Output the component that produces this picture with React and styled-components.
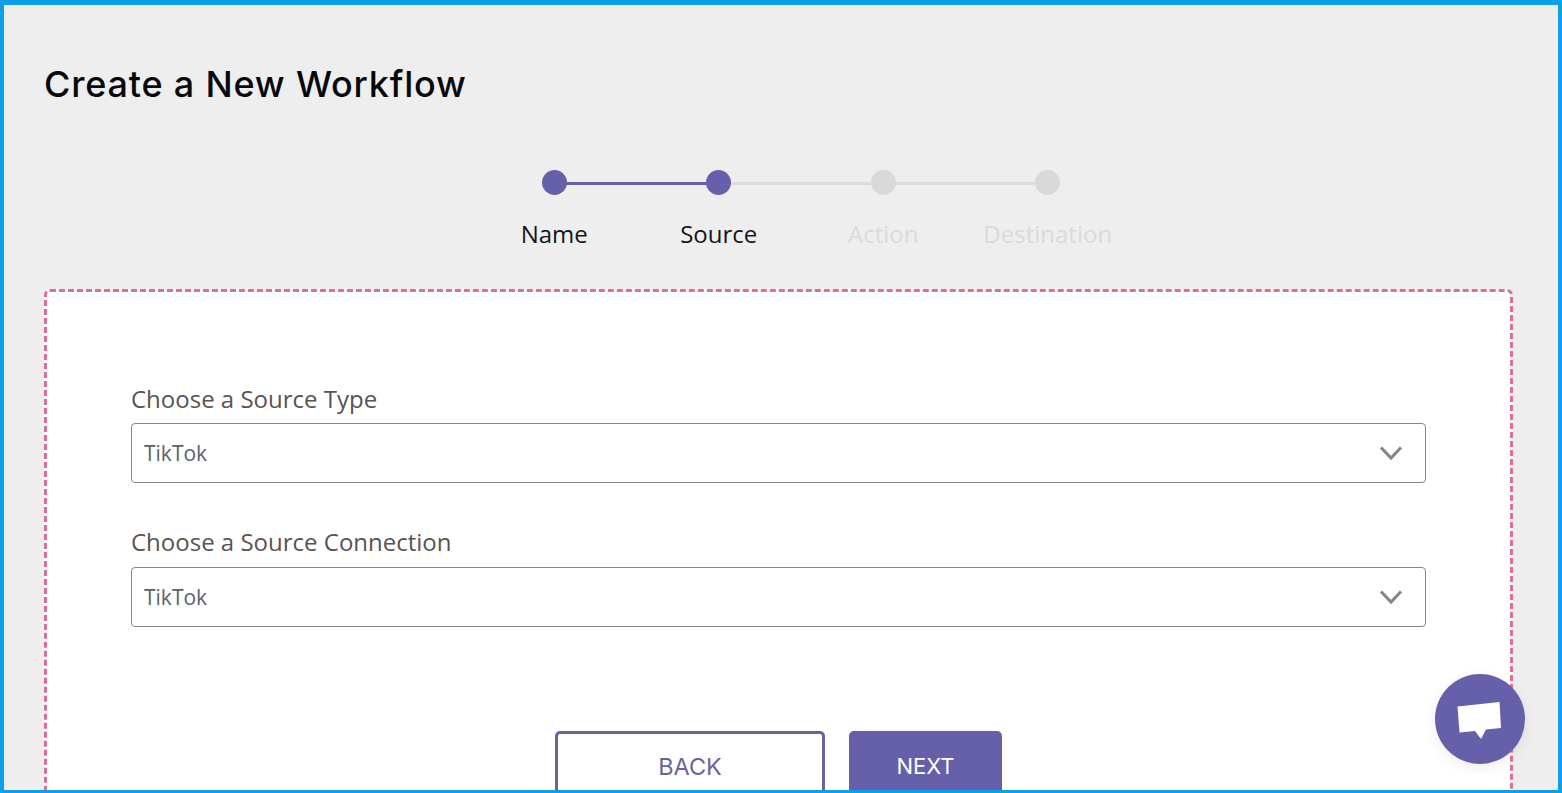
import React from "react";
import styled, { createGlobalStyle } from "styled-components";

const Global = createGlobalStyle`
  html, body { margin: 0; padding: 0; background: #eeeeef; }
  * { box-sizing: border-box; }
`;

const Frame = styled.div`
  position: relative;
  width: 1562px;
  height: 793px;
  overflow: hidden;
  background: #eeeeef;
  border: solid #0d9fea;
  border-width: 5px 4px 3px 4px;
  padding: 56px 45px 0 40px;
`;

const Title = styled.h1`
  margin: 0;
  font-family: "Inter", "Liberation Sans", sans-serif;
  font-weight: 500;
  font-size: 36px;
  line-height: 46px;
  letter-spacing: 0.8px;
  color: #08090c;
`;

const Stepper = styled.div`
  display: grid;
  grid-template-columns: repeat(4, 164.5px);
  justify-content: center;
  margin: 63px 0 0 45px;
  height: 120px;
`;

const Step = styled.div`
  position: relative;
  display: flex;
  flex-direction: column;
  align-items: center;
  white-space: nowrap;
`;

const Dot = styled.span`
  position: relative;
  z-index: 1;
  width: 25px;
  height: 25px;
  border-radius: 50%;
  background: ${(p) => (p.$active ? "#6560a9" : "#d9d9d9")};
`;

const Connector = styled.span`
  position: absolute;
  top: 12px;
  left: 50%;
  width: 164.5px;
  height: 3px;
  background: ${(p) => (p.$active ? "#6560a9" : "#dcdcdc")};
`;

const StepLabel = styled.span`
  margin-top: 23px;
  font-family: "Open Sans", "Liberation Sans", sans-serif;
  font-size: 24px;
  line-height: 32px;
  color: ${(p) => (p.$active ? "#15161a" : "#dadada")};
`;

const Card = styled.section`
  margin-top: -1px;
  border: 3px dashed #df6f8c;
  border-radius: 6px;
  background: #fff;
  height: 560px;
  padding: 91px 84px 0 84px;
`;

const Field = styled.div`
  margin-bottom: 43px;
`;

const FieldLabel = styled.label`
  display: block;
  font-family: "Open Sans", "Liberation Sans", sans-serif;
  font-size: 24px;
  line-height: 32px;
  margin-bottom: ${(p) => p.$gap}px;
  color: #5a5350;
`;

const SelectBox = styled.div`
  display: flex;
  align-items: center;
  justify-content: space-between;
  height: 60px;
  padding: 0 22px 0 12px;
  border: 1px solid #85878a;
  border-radius: 4px;
  background: #fff;
  font-family: "Open Sans", "Liberation Sans", sans-serif;
  font-size: 21px;
  color: #5c6166;
`;

const Chevron = () => (
  <svg width="24" height="16" viewBox="0 0 24 16" fill="none">
    <path d="M2 2.5 L12 13 L22 2.5" stroke="#80868b" strokeWidth="3" />
  </svg>
);

const Actions = styled.div`
  display: flex;
  justify-content: center;
  gap: 24px;
  margin: 104px 0 0 0;
`;

const Button = styled.button`
  width: ${(p) => (p.$primary ? "153px" : "270px")};
  height: 70px;
  padding: 0;
  border: 3px solid ${(p) => (p.$primary ? "#6560a9" : "#6a639b")};
  border-radius: 5px;
  background: ${(p) => (p.$primary ? "#6560a9" : "#fff")};
  color: ${(p) => (p.$primary ? "#fff" : "#6a639b")};
  font-family: "Inter", "Liberation Sans", sans-serif;
  font-size: ${(p) => (p.$primary ? "22px" : "23.5px")};
  font-weight: 400;
`;

const ChatFab = styled.div`
  position: absolute;
  left: 1431px;
  top: 669px;
  width: 90px;
  height: 90px;
  border-radius: 50%;
  background: #6560a9;
  box-shadow: 0 4px 14px rgba(0, 0, 0, 0.08);
  display: flex;
  align-items: center;
  justify-content: center;
`;

const ChatIcon = () => (
  <svg width="46" height="42" viewBox="0 0 46 42">
    <path d="M0.5 8.5 L42.5 4 L44 30 L29 31.5 L24 41 L18 33 L2.5 34.5 Z" fill="#fff" />
  </svg>
);

const steps = [
  { label: "Name", active: true, next: true },
  { label: "Source", active: true, next: false },
  { label: "Action", active: false, next: false },
  { label: "Destination", active: false },
];

export default function App() {
  return (
    <>
      <Global />
      <Frame>
        <Title>Create a New Workflow</Title>
        <Stepper>
          {steps.map((s, i) => (
            <Step key={s.label}>
              {i < steps.length - 1 && <Connector $active={s.next} />}
              <Dot $active={s.active} />
              <StepLabel $active={s.active}>{s.label}</StepLabel>
            </Step>
          ))}
        </Stepper>
        <Card>
          <Field>
            <FieldLabel $gap={8}>Choose a Source Type</FieldLabel>
            <SelectBox>
              TikTok
              <Chevron />
            </SelectBox>
          </Field>
          <Field>
            <FieldLabel $gap={9}>Choose a Source Connection</FieldLabel>
            <SelectBox>
              TikTok
              <Chevron />
            </SelectBox>
          </Field>
          <Actions>
            <Button>BACK</Button>
            <Button $primary>NEXT</Button>
          </Actions>
        </Card>
        <ChatFab>
          <ChatIcon />
        </ChatFab>
      </Frame>
    </>
  );
}
